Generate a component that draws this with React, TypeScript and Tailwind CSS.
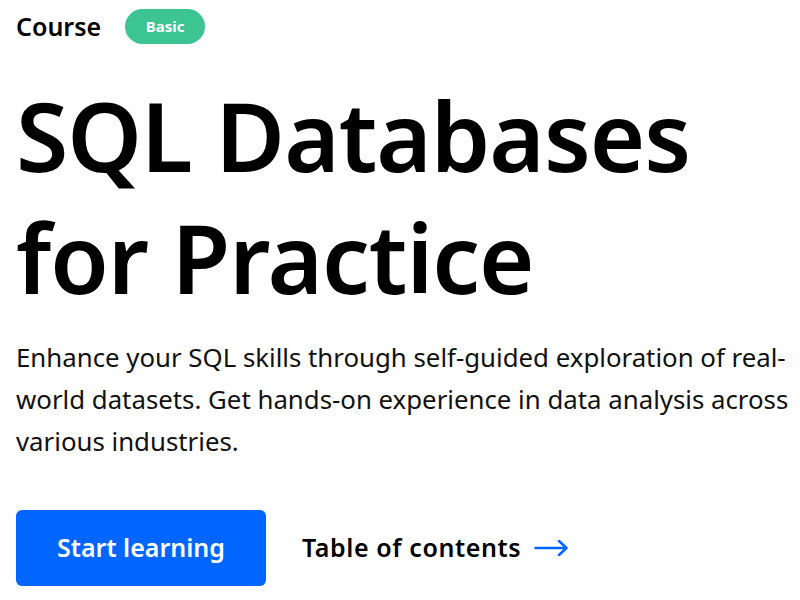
import React from "react";

export default function App() {
  return (
    <div className="w-[800px] h-[600px] overflow-hidden bg-white text-black" style={{ fontFamily: '"Noto Sans", "Open Sans", sans-serif' }}>
      <div className="px-4 pt-2">
        <div className="flex items-center gap-6 h-[36px]">
          <span className="text-[25px] font-semibold leading-none">Course</span>
          <span className="h-[35px] w-[80px] rounded-full bg-[#3cc492] text-white text-[15px] font-bold flex items-center justify-center">Basic</span>
        </div>
        <h1 className="mt-[30px] text-[95px] font-semibold leading-[122px] tracking-[-1px]">SQL Databases<br />for Practice</h1>
        <p className="mt-[18px] w-[780px] text-[25.8px] leading-[42px] text-[#111]">Enhance your SQL skills through self-guided exploration of real-world datasets. Get hands-on experience in data analysis across various industries.</p>
        <div className="mt-[48px] flex items-center gap-9">
          <button className="h-[76px] w-[250px] rounded-md bg-[#0066ff] text-white text-[25px] font-semibold">Start learning</button>
          <span className="flex items-center gap-[13px] text-[25px] font-semibold tracking-[0.6px]">Table of contents
            <svg width="34" height="18" viewBox="0 0 34 18" fill="none" stroke="#0066ff" strokeWidth="2.5" strokeLinecap="round" strokeLinejoin="round"><path d="M1.5 9h31M25 2l7.5 7-7.5 7" /></svg>
          </span>
        </div>
      </div>
    </div>
  );
}
